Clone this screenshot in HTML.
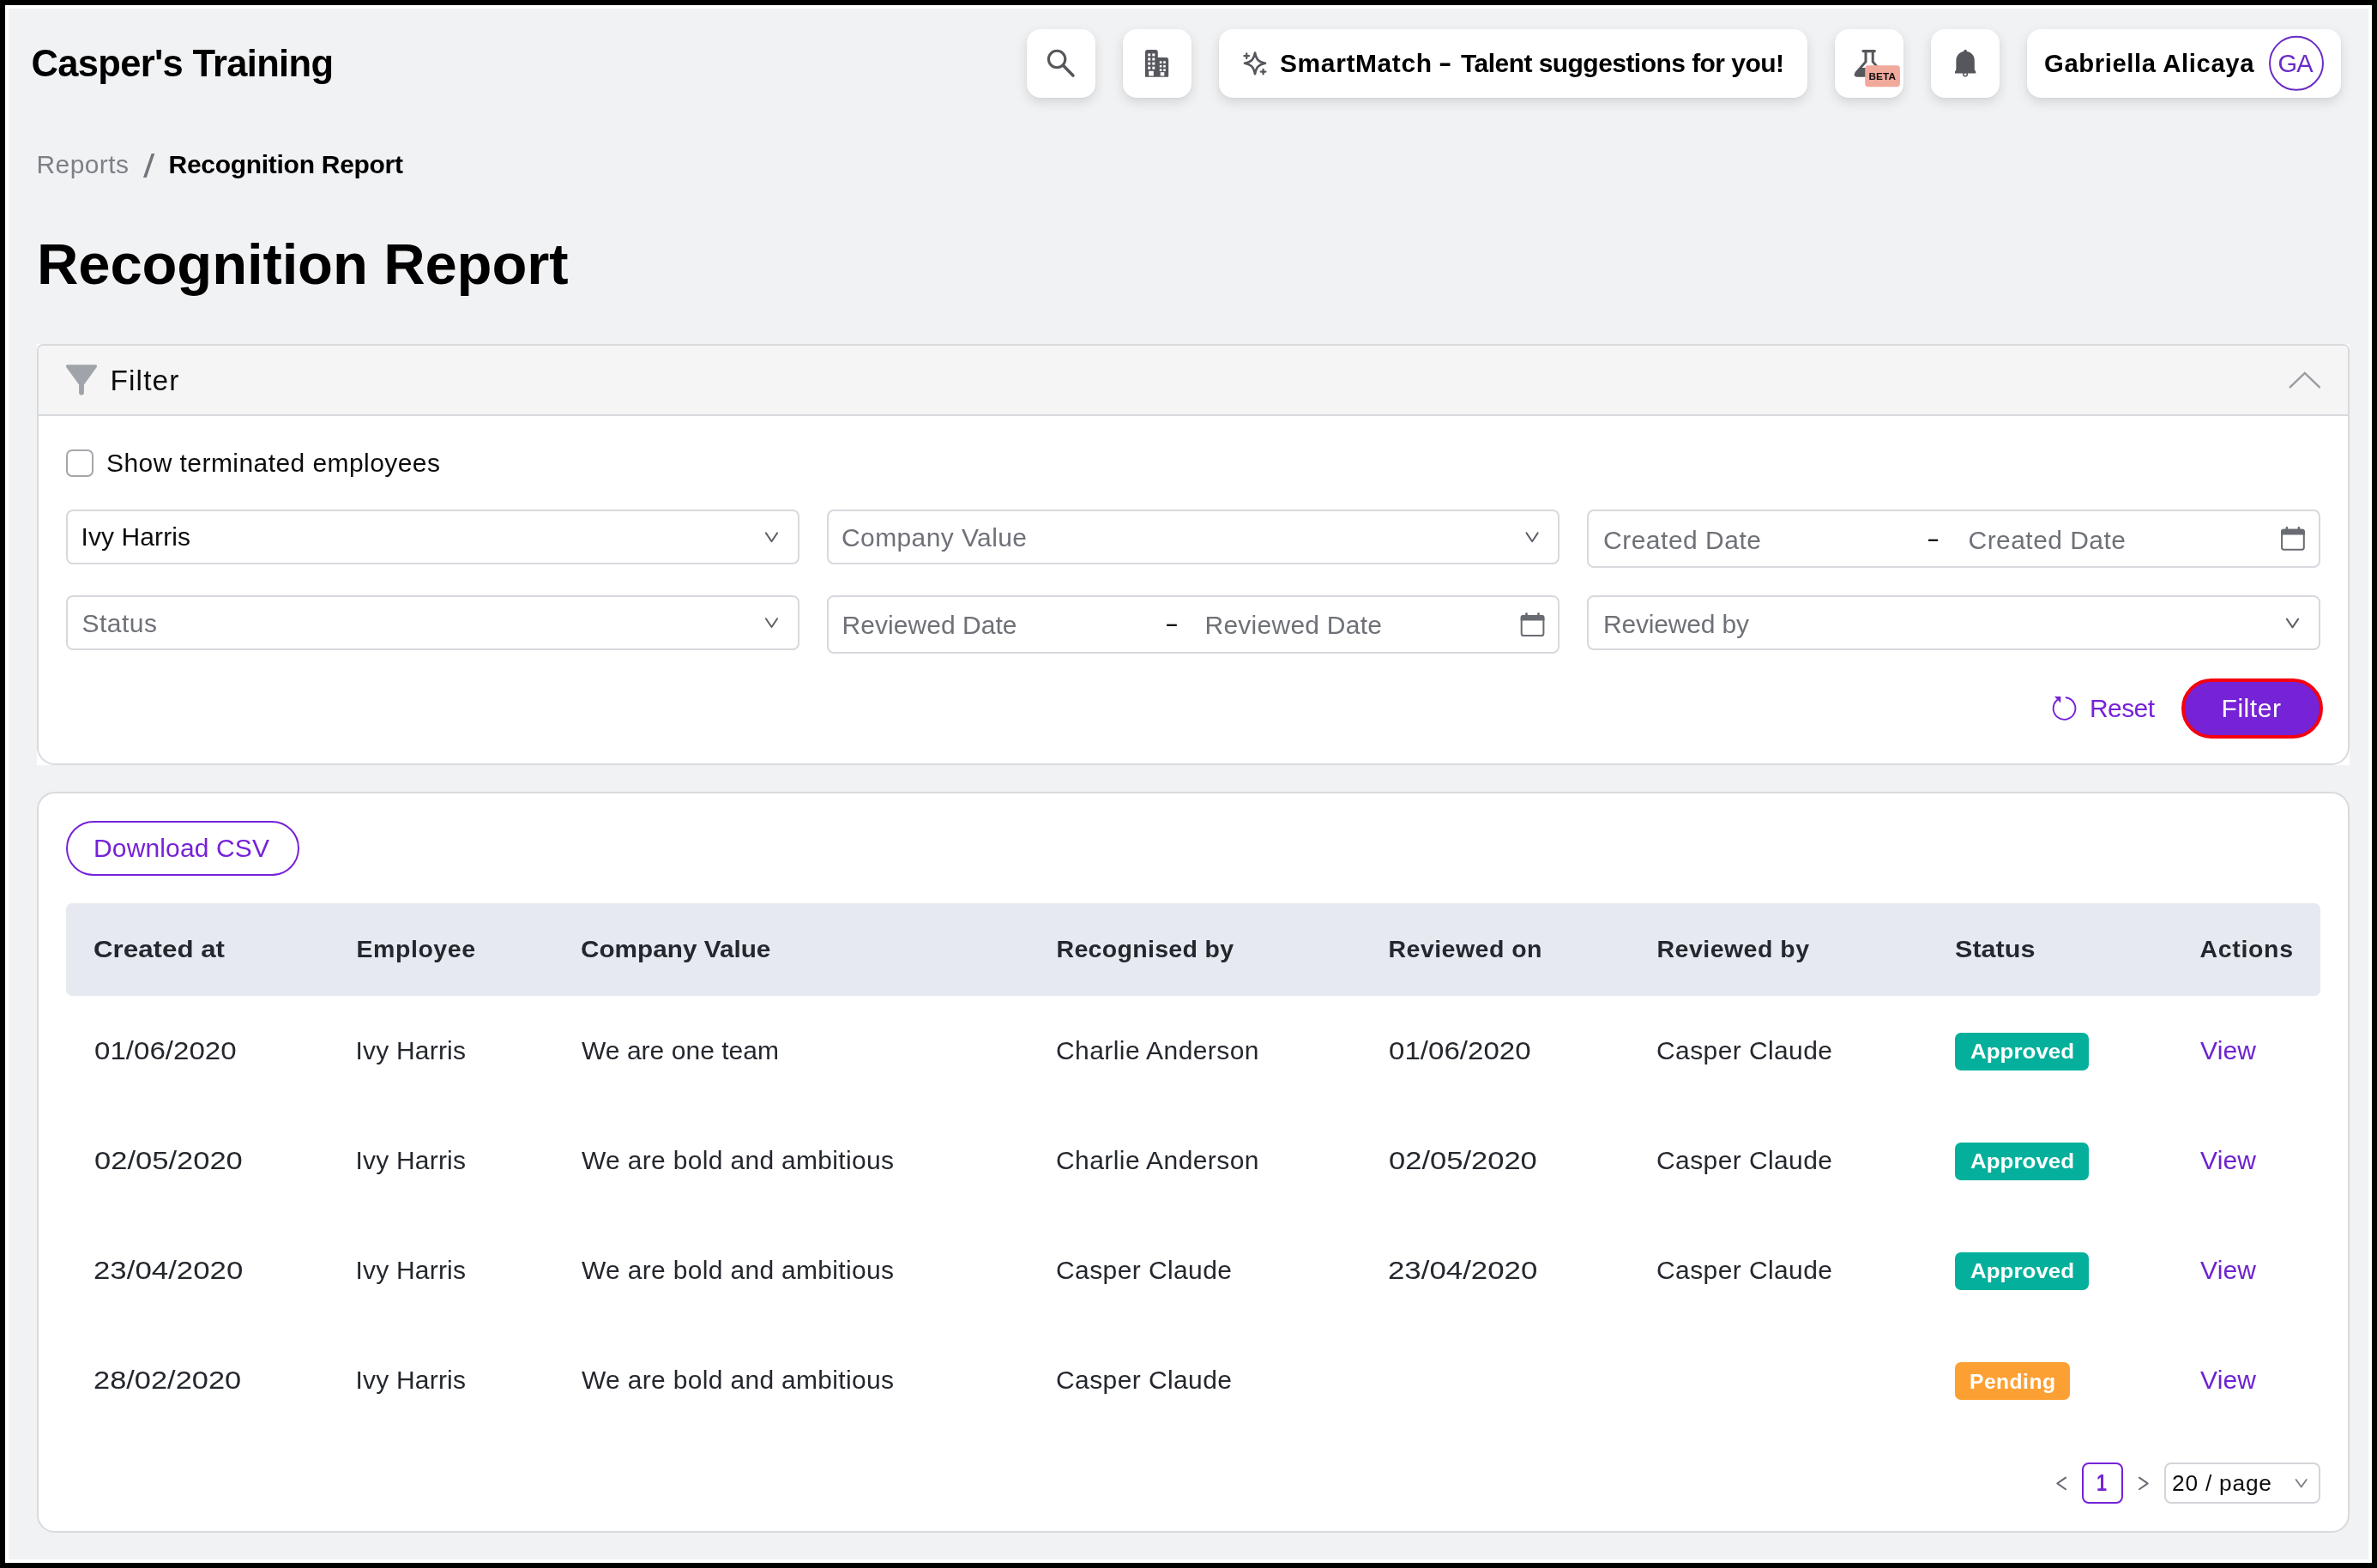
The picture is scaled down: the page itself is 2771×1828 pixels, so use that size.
<!DOCTYPE html>
<html lang="en">
<head>
<meta charset="utf-8">
<title>Recognition Report</title>
<style>
*{box-sizing:border-box;margin:0;padding:0}
html,body{width:2771px;height:1828px;overflow:hidden;background:#000}
body{position:relative;font-family:'Liberation Sans',sans-serif;color:#121212}
.abs,.t,.b{position:absolute}
.t{white-space:pre;line-height:1}
#white{left:6px;top:6px;width:2759px;height:1816px;background:#fff}
#page{left:10px;top:10px;width:2751px;height:1808px;background:#f1f2f4}
.hb{background:#fff;border-radius:16px;top:34px;height:80px;box-shadow:0 5px 14px rgba(0,0,0,.12),0 1px 3px rgba(0,0,0,.04)}
.sel{background:#fff;border:2px solid #d8d9de;border-radius:8px}
.badge{border-radius:7px;height:44px;left:2279px}
</style>
</head>
<body>
<div class="b" id="white"></div>
<div class="b" id="page"></div>

<!-- header buttons -->
<div class="b hb" style="left:1197px;width:80px"></div>
<div class="b hb" style="left:1309px;width:80px"></div>
<div class="b hb" style="left:1421px;width:686px"></div>
<div class="b hb" style="left:2139px;width:80px"></div>
<div class="b hb" style="left:2251px;width:80px"></div>
<div class="b hb" style="left:2363px;width:366px"></div>

<!-- filter panel -->
<div class="b" id="fwrap" style="left:43px;top:401px;width:2696px;height:491px;background:#fff">
  <div class="b" id="fpanel" style="left:0;top:0;width:2696px;height:491px;border:2px solid #d9dadd;border-radius:7px 7px 21px 21px;overflow:hidden;background:#fff">
    <div class="b" style="left:0;top:0;width:100%;height:82px;background:#f5f5f6;border-bottom:2px solid #d9dadd"></div>
  </div>
</div>
<div class="b" style="left:77px;top:524px;width:32px;height:32px;border:2px solid #a4a6ab;border-radius:7px;background:#fff"></div>
<div class="b sel" style="left:77px;top:594px;width:855px;height:64px"></div>
<div class="b sel" style="left:964px;top:594px;width:854px;height:64px"></div>
<div class="b sel" style="left:1850px;top:594px;width:855px;height:68px"></div>
<div class="b sel" style="left:77px;top:694px;width:855px;height:64px"></div>
<div class="b sel" style="left:964px;top:694px;width:854px;height:68px"></div>
<div class="b sel" style="left:1850px;top:694px;width:855px;height:64px"></div>
<div class="b" style="left:2543px;top:791px;width:165px;height:70px;border-radius:35px;background:#7622d7;border:4.5px solid #f4000f"></div>

<!-- table panel -->
<div class="b" id="tpanel" style="left:43px;top:923px;width:2696px;height:864px;border:2px solid #d9dadd;border-radius:21px;background:#fff"></div>
<div class="b" style="left:77px;top:957px;width:272px;height:64px;border-radius:32px;border:2px solid #7622d7;background:#fff"></div>
<div class="b" style="left:77px;top:1053px;width:2628px;height:108px;border-radius:7px;background:#e6eaf0"></div>

<div class="b badge" style="top:1204px;width:156px;background:#04b09b"></div>
<div class="b badge" style="top:1332px;width:156px;background:#04b09b"></div>
<div class="b badge" style="top:1460px;width:156px;background:#04b09b"></div>
<div class="b badge" style="top:1588px;width:134px;background:#fda034"></div>

<div class="b" style="left:2427px;top:1705px;width:48px;height:48px;border:2px solid #7622d7;border-radius:8px;background:#fff"></div>
<div class="b" style="left:2523px;top:1705px;width:182px;height:48px;border:2px solid #d4d5d9;border-radius:8px;background:#fff"></div>

<svg class="abs" style="left:0;top:0" width="2771" height="1828" viewBox="0 0 2771 1828" fill="none">
<!-- search -->
<g stroke="#55575c" stroke-width="3.1" stroke-linecap="round">
<circle cx="1232.1" cy="69" r="9.7"/>
<path d="M1239.6 76.6 L1250.9 88" stroke-width="3.6"/>
</g>
<!-- building -->
<g fill="#55575c">
<path d="M1335 89.8 V61 Q1335 57.9 1338 57.9 H1346.8 Q1349.8 57.9 1349.8 61 V66.9 H1359.2 Q1362.2 66.9 1362.2 69.9 V88.6 Q1362.2 89.8 1361 89.8 Z"/>
</g>
<g fill="#fff">
<rect x="1338.2" y="62.4" width="3" height="3"/><rect x="1343.3" y="62.4" width="3" height="3"/>
<rect x="1338.2" y="67.5" width="3" height="3"/><rect x="1343.3" y="67.5" width="3" height="3"/>
<rect x="1338.2" y="72.6" width="3" height="3"/><rect x="1343.3" y="72.6" width="3" height="3"/>
<rect x="1338.2" y="77.7" width="3" height="3"/><rect x="1343.3" y="77.7" width="3" height="3"/>
<rect x="1339.2" y="82.8" width="5.6" height="5.6"/>
<rect x="1351.8" y="71.3" width="2.6" height="2.6"/><rect x="1356.2" y="71.3" width="2.6" height="2.6"/>
<rect x="1351.8" y="75.9" width="2.6" height="2.6"/><rect x="1356.2" y="75.9" width="2.6" height="2.6"/>
<rect x="1351.8" y="80.4" width="2.6" height="2.6"/><rect x="1356.2" y="80.4" width="2.6" height="2.6"/>
<rect x="1352.7" y="84.2" width="4.6" height="4.2"/>
</g>
<!-- sparkles -->
<g stroke="#55575c" stroke-width="2.7" stroke-linejoin="round" stroke-linecap="round">
<path d="M1463 61.6 C1464.6 69.6 1467 72 1475 73.8 C1467 75.6 1464.6 78 1463 86.2 C1461.4 78 1459 75.6 1451 73.8 C1459 72 1461.4 69.6 1463 61.6 Z"/>
<path d="M1453.2 62.4 V68 M1450.4 65.2 H1456" stroke-width="2.3"/>
<path d="M1472.6 80.8 V86.4 M1469.8 83.6 H1475.4" stroke-width="2.3"/>
</g>
<!-- flask -->
<path d="M2172 57.9 H2185.3 Q2186.9 57.9 2186.9 59.6 Q2186.9 61.3 2185.3 61.3 H2184.7 V71.6 L2195.6 84 Q2198.6 89.8 2192.5 89.8 H2165.8 Q2159.7 89.8 2162.7 84 L2173.5 71.6 V61.3 H2172 Q2170.4 61.3 2170.4 59.6 Q2170.4 57.9 2172 57.9 Z" fill="#55575c"/>
<path d="M2176.5 61.3 H2181.7 V72.6 L2187.5 79 H2170.7 L2176.5 72.6 Z" fill="#fff"/>
<rect x="2174.2" y="76.3" width="40.7" height="24.9" rx="3.6" fill="#f1a99b"/>
<!-- bell -->
<g fill="#55575c">
<path d="M2279 85.6 V83.6 Q2280.4 82.6 2280.4 80 V70.4 A10.7 10.7 0 0 1 2301.8 70.4 V80 Q2301.8 82.6 2303.3 83.6 V85.6 Z"/>
<circle cx="2291.1" cy="59.4" r="1.7"/>
</g>
<circle cx="2291.1" cy="86.6" r="2.3" stroke="#55575c" stroke-width="1.5"/>
<!-- avatar -->
<circle cx="2677" cy="73.8" r="31" stroke="#6a2bc6" stroke-width="2"/>
<!-- funnel -->
<path d="M79 425.2 H111 Q114.4 425.4 112.4 428.4 L97.9 448.6 V457.8 Q97.9 460.6 95 460.6 Q92.1 460.6 92.1 457.8 V448.6 L77.6 428.4 Q75.6 425.4 79 425.2 Z" fill="#a0a3a9"/>
<!-- chevron up -->
<path d="M2669.7 451.4 L2686.8 434.8 L2703.9 451.4" stroke="#9a9ca1" stroke-width="2.4" stroke-linecap="round" stroke-linejoin="miter"/>
<!-- select chevrons -->
<g stroke="#5e6067" stroke-width="2" stroke-linecap="round" stroke-linejoin="round">
<path d="M892.9 621.4 L899.5 631.2 L906.1 621.4"/>
<path d="M1779.5 621.4 L1786.1 631.2 L1792.7 621.4"/>
<path d="M892.9 721.2 L899.5 731 L906.1 721.2"/>
<path d="M2665.9 721.6 L2672.5 731.4 L2679.1 721.6"/>
</g>
<!-- calendars -->
<g id="cal1">
<rect x="2660.1" y="617.8" width="25.7" height="23" rx="2.6" stroke="#696b72" stroke-width="2"/>
<path d="M2659.1 623.4 V619.4 Q2659.1 616.8 2661.7 616.8 H2684.2 Q2686.8 616.8 2686.8 619.4 V623.4 Z" fill="#696b72"/>
<rect x="2664.6" y="614.1" width="2.6" height="4" rx="1" fill="#696b72"/>
<rect x="2678.6" y="614.1" width="2.6" height="4" rx="1" fill="#696b72"/>
</g>
<g transform="translate(-886.4 100.2)">
<rect x="2660.1" y="617.8" width="25.7" height="23" rx="2.6" stroke="#696b72" stroke-width="2"/>
<path d="M2659.1 623.4 V619.4 Q2659.1 616.8 2661.7 616.8 H2684.2 Q2686.8 616.8 2686.8 619.4 V623.4 Z" fill="#696b72"/>
<rect x="2664.6" y="614.1" width="2.6" height="4" rx="1" fill="#696b72"/>
<rect x="2678.6" y="614.1" width="2.6" height="4" rx="1" fill="#696b72"/>
</g>
<!-- reset -->
<path d="M2408.6 813.2 A12.9 12.9 0 1 1 2398.3 816" stroke="#7622d7" stroke-width="1.9" stroke-linecap="round"/>
<path d="M2394.9 812.1 L2402.4 812.1 L2402.2 819.4 Z" fill="#7622d7"/>
<!-- pagination -->
<g stroke="#696b72" stroke-width="2" stroke-linecap="round" stroke-linejoin="round">
<path d="M2408.1 1722.6 L2398.3 1729.4 L2408.1 1736.2"/>
<path d="M2493.9 1722.6 L2503.7 1729.4 L2493.9 1736.2"/>
</g>
<path d="M2676.6 1724.9 L2682.7 1733.5 L2688.8 1724.9" stroke="#7b7d84" stroke-width="1.8" stroke-linecap="round" stroke-linejoin="round"/>
</svg>

<div class="abs" id="tx" style="left:0;top:0;width:2771px;height:1828px;will-change:transform">
<div class="t" style="left:36.50px;top:53px;font-size:43.5px;font-weight:700;color:#000;letter-spacing:-0.675px;">Casper's Training</div>
<div class="t" style="left:42.50px;top:177px;font-size:30px;font-weight:400;color:#7d8087;letter-spacing:0.409px;">Reports</div>
<div class="t" style="left:167.00px;top:174px;font-size:39px;font-weight:400;color:#73767d;letter-spacing:2.456px;transform-origin:0 50%;transform:scaleX(1.228);">/</div>
<div class="t" style="left:196.50px;top:177px;font-size:30px;font-weight:700;color:#000;letter-spacing:-0.284px;">Recognition Report</div>
<div class="t" style="left:43.00px;top:274px;font-size:67px;font-weight:700;color:#000;letter-spacing:-0.123px;">Recognition Report</div>
<div class="t" style="left:1492.00px;top:59px;font-size:30px;font-weight:700;color:#000;letter-spacing:0.587px;">SmartMatch</div>
<div class="t" style="left:1676.50px;top:58px;font-size:30px;font-weight:700;color:#000;letter-spacing:1.400px;transform-origin:0 50%;transform:scaleX(1.535);">-</div>
<div class="t" style="left:1703.00px;top:59px;font-size:30px;font-weight:700;color:#000;letter-spacing:-0.544px;">Talent suggestions for you!</div>
<div class="t" style="left:2383.00px;top:59px;font-size:29.3px;font-weight:700;color:#000;letter-spacing:0.590px;">Gabriella Alicaya</div>
<div class="t" style="left:2655.50px;top:60px;font-size:29px;font-weight:400;color:#6a2bc6;letter-spacing:-0.906px;">GA</div>
<div class="t" style="left:2178.50px;top:84px;font-size:11.8px;font-weight:700;color:#0c0c0d;letter-spacing:0.083px;">BETA</div>
<div class="t" style="left:128.50px;top:427px;font-size:33.5px;font-weight:400;color:#0c0c0d;letter-spacing:1.109px;">Filter</div>
<div class="t" style="left:124.00px;top:525px;font-size:30px;font-weight:400;color:#0c0c0d;letter-spacing:0.436px;">Show terminated employees</div>
<div class="t" style="left:94.50px;top:611px;font-size:30px;font-weight:400;color:#0c0c0d;letter-spacing:0.092px;">Ivy Harris</div>
<div class="t" style="left:95.50px;top:712px;font-size:30px;font-weight:400;color:#6f7178;letter-spacing:0.488px;">Status</div>
<div class="t" style="left:981.00px;top:612px;font-size:30px;font-weight:400;color:#6f7178;letter-spacing:0.397px;">Company Value</div>
<div class="t" style="left:981.50px;top:714px;font-size:30px;font-weight:400;color:#6f7178;letter-spacing:0.047px;">Reviewed Date</div>
<div class="t" style="left:1358.00px;top:712px;font-size:30px;font-weight:400;color:#0c0c0d;letter-spacing:1.600px;transform-origin:0 50%;transform:scaleX(1.600);">-</div>
<div class="t" style="left:1404.50px;top:714px;font-size:30px;font-weight:400;color:#6f7178;letter-spacing:0.255px;">Reviewed Date</div>
<div class="t" style="left:1869.00px;top:615px;font-size:30px;font-weight:400;color:#6f7178;letter-spacing:0.506px;">Created Date</div>
<div class="t" style="left:2245.50px;top:613px;font-size:30px;font-weight:400;color:#0c0c0d;letter-spacing:1.700px;transform-origin:0 50%;transform:scaleX(1.518);">-</div>
<div class="t" style="left:2294.50px;top:615px;font-size:30px;font-weight:400;color:#6f7178;letter-spacing:0.460px;">Created Date</div>
<div class="t" style="left:1869.00px;top:713px;font-size:30px;font-weight:400;color:#6f7178;letter-spacing:-0.177px;">Reviewed by</div>
<div class="t" style="left:2436.00px;top:811px;font-size:30px;font-weight:400;color:#7622d7;letter-spacing:-0.594px;">Reset</div>
<div class="t" style="left:2589.50px;top:811px;font-size:30px;font-weight:400;color:#fff;letter-spacing:0.566px;">Filter</div>
<div class="t" style="left:109.00px;top:974px;font-size:30px;font-weight:400;color:#7622d7;letter-spacing:0.142px;">Download CSV</div>
<div class="t" style="left:108.50px;top:1092px;font-size:28.5px;font-weight:700;color:#24272d;letter-spacing:0.000px;transform-origin:0 50%;transform:scaleX(1.098);">Created at</div>
<div class="t" style="left:415.50px;top:1092px;font-size:28.5px;font-weight:700;color:#24272d;letter-spacing:0.551px;">Employee</div>
<div class="t" style="left:677.00px;top:1092px;font-size:28.5px;font-weight:700;color:#24272d;letter-spacing:0.000px;transform-origin:0 50%;transform:scaleX(1.043);">Company Value</div>
<div class="t" style="left:1231.50px;top:1092px;font-size:28.5px;font-weight:700;color:#24272d;letter-spacing:0.315px;">Recognised by</div>
<div class="t" style="left:1618.50px;top:1092px;font-size:28.5px;font-weight:700;color:#24272d;letter-spacing:0.478px;">Reviewed on</div>
<div class="t" style="left:1931.50px;top:1092px;font-size:28.5px;font-weight:700;color:#24272d;letter-spacing:0.484px;">Reviewed by</div>
<div class="t" style="left:2279.00px;top:1092px;font-size:28.5px;font-weight:700;color:#24272d;letter-spacing:0.000px;transform-origin:0 50%;transform:scaleX(1.073);">Status</div>
<div class="t" style="left:2564.50px;top:1092px;font-size:28.5px;font-weight:700;color:#24272d;letter-spacing:0.664px;">Actions</div>
<div class="t" style="left:109.50px;top:1210px;font-size:30px;font-weight:400;color:#24272d;letter-spacing:0.000px;transform-origin:0 50%;transform:scaleX(1.103);">01/06/2020</div>
<div class="t" style="left:414.50px;top:1210px;font-size:30px;font-weight:400;color:#24272d;letter-spacing:0.203px;">Ivy Harris</div>
<div class="t" style="left:678.00px;top:1210px;font-size:30px;font-weight:400;color:#24272d;letter-spacing:0.030px;">We are one team</div>
<div class="t" style="left:1231.00px;top:1210px;font-size:30px;font-weight:400;color:#24272d;letter-spacing:0.423px;">Charlie Anderson</div>
<div class="t" style="left:1619.00px;top:1210px;font-size:30px;font-weight:400;color:#24272d;letter-spacing:0.000px;transform-origin:0 50%;transform:scaleX(1.103);">01/06/2020</div>
<div class="t" style="left:1931.00px;top:1210px;font-size:30px;font-weight:400;color:#24272d;letter-spacing:0.406px;">Casper Claude</div>
<div class="t" style="left:2297.00px;top:1214px;font-size:24.6px;font-weight:700;color:#fff;letter-spacing:0.000px;transform-origin:0 50%;transform:scaleX(1.055);">Approved</div>
<div class="t" style="left:2565.00px;top:1210px;font-size:30px;font-weight:400;color:#6d22d0;letter-spacing:0.172px;">View</div>
<div class="t" style="left:109.50px;top:1338px;font-size:30px;font-weight:400;color:#24272d;letter-spacing:0.000px;transform-origin:0 50%;transform:scaleX(1.151);">02/05/2020</div>
<div class="t" style="left:414.50px;top:1338px;font-size:30px;font-weight:400;color:#24272d;letter-spacing:0.203px;">Ivy Harris</div>
<div class="t" style="left:678.00px;top:1338px;font-size:30px;font-weight:400;color:#24272d;letter-spacing:0.320px;">We are bold and ambitious</div>
<div class="t" style="left:1231.00px;top:1338px;font-size:30px;font-weight:400;color:#24272d;letter-spacing:0.423px;">Charlie Anderson</div>
<div class="t" style="left:1619.00px;top:1338px;font-size:30px;font-weight:400;color:#24272d;letter-spacing:0.000px;transform-origin:0 50%;transform:scaleX(1.151);">02/05/2020</div>
<div class="t" style="left:1931.00px;top:1338px;font-size:30px;font-weight:400;color:#24272d;letter-spacing:0.406px;">Casper Claude</div>
<div class="t" style="left:2297.00px;top:1342px;font-size:24.6px;font-weight:700;color:#fff;letter-spacing:0.000px;transform-origin:0 50%;transform:scaleX(1.055);">Approved</div>
<div class="t" style="left:2565.00px;top:1338px;font-size:30px;font-weight:400;color:#6d22d0;letter-spacing:0.172px;">View</div>
<div class="t" style="left:108.50px;top:1466px;font-size:30px;font-weight:400;color:#24272d;letter-spacing:0.000px;transform-origin:0 50%;transform:scaleX(1.161);">23/04/2020</div>
<div class="t" style="left:414.50px;top:1466px;font-size:30px;font-weight:400;color:#24272d;letter-spacing:0.203px;">Ivy Harris</div>
<div class="t" style="left:678.00px;top:1466px;font-size:30px;font-weight:400;color:#24272d;letter-spacing:0.320px;">We are bold and ambitious</div>
<div class="t" style="left:1231.00px;top:1466px;font-size:30px;font-weight:400;color:#24272d;letter-spacing:0.406px;">Casper Claude</div>
<div class="t" style="left:1618.00px;top:1466px;font-size:30px;font-weight:400;color:#24272d;letter-spacing:0.000px;transform-origin:0 50%;transform:scaleX(1.161);">23/04/2020</div>
<div class="t" style="left:1931.00px;top:1466px;font-size:30px;font-weight:400;color:#24272d;letter-spacing:0.406px;">Casper Claude</div>
<div class="t" style="left:2297.00px;top:1470px;font-size:24.6px;font-weight:700;color:#fff;letter-spacing:0.000px;transform-origin:0 50%;transform:scaleX(1.055);">Approved</div>
<div class="t" style="left:2565.00px;top:1466px;font-size:30px;font-weight:400;color:#6d22d0;letter-spacing:0.172px;">View</div>
<div class="t" style="left:108.50px;top:1594px;font-size:30px;font-weight:400;color:#24272d;letter-spacing:0.000px;transform-origin:0 50%;transform:scaleX(1.147);">28/02/2020</div>
<div class="t" style="left:414.50px;top:1594px;font-size:30px;font-weight:400;color:#24272d;letter-spacing:0.203px;">Ivy Harris</div>
<div class="t" style="left:678.00px;top:1594px;font-size:30px;font-weight:400;color:#24272d;letter-spacing:0.320px;">We are bold and ambitious</div>
<div class="t" style="left:1231.00px;top:1594px;font-size:30px;font-weight:400;color:#24272d;letter-spacing:0.406px;">Casper Claude</div>
<div class="t" style="left:2296.00px;top:1599px;font-size:24.6px;font-weight:700;color:#fff;letter-spacing:0.497px;">Pending</div>
<div class="t" style="left:2565.00px;top:1594px;font-size:30px;font-weight:400;color:#6d22d0;letter-spacing:0.172px;">View</div>
<div class="t" style="left:2444.00px;top:1715px;font-size:27.5px;font-weight:700;color:#7622d7;letter-spacing:-5.097px;transform-origin:0 50%;transform:scaleX(0.787);">1</div>
<div class="t" style="left:2532.00px;top:1716px;font-size:26.3px;font-weight:400;color:#0c0c0d;letter-spacing:0.791px;">20 / page</div>
</div>
</body>
</html>
